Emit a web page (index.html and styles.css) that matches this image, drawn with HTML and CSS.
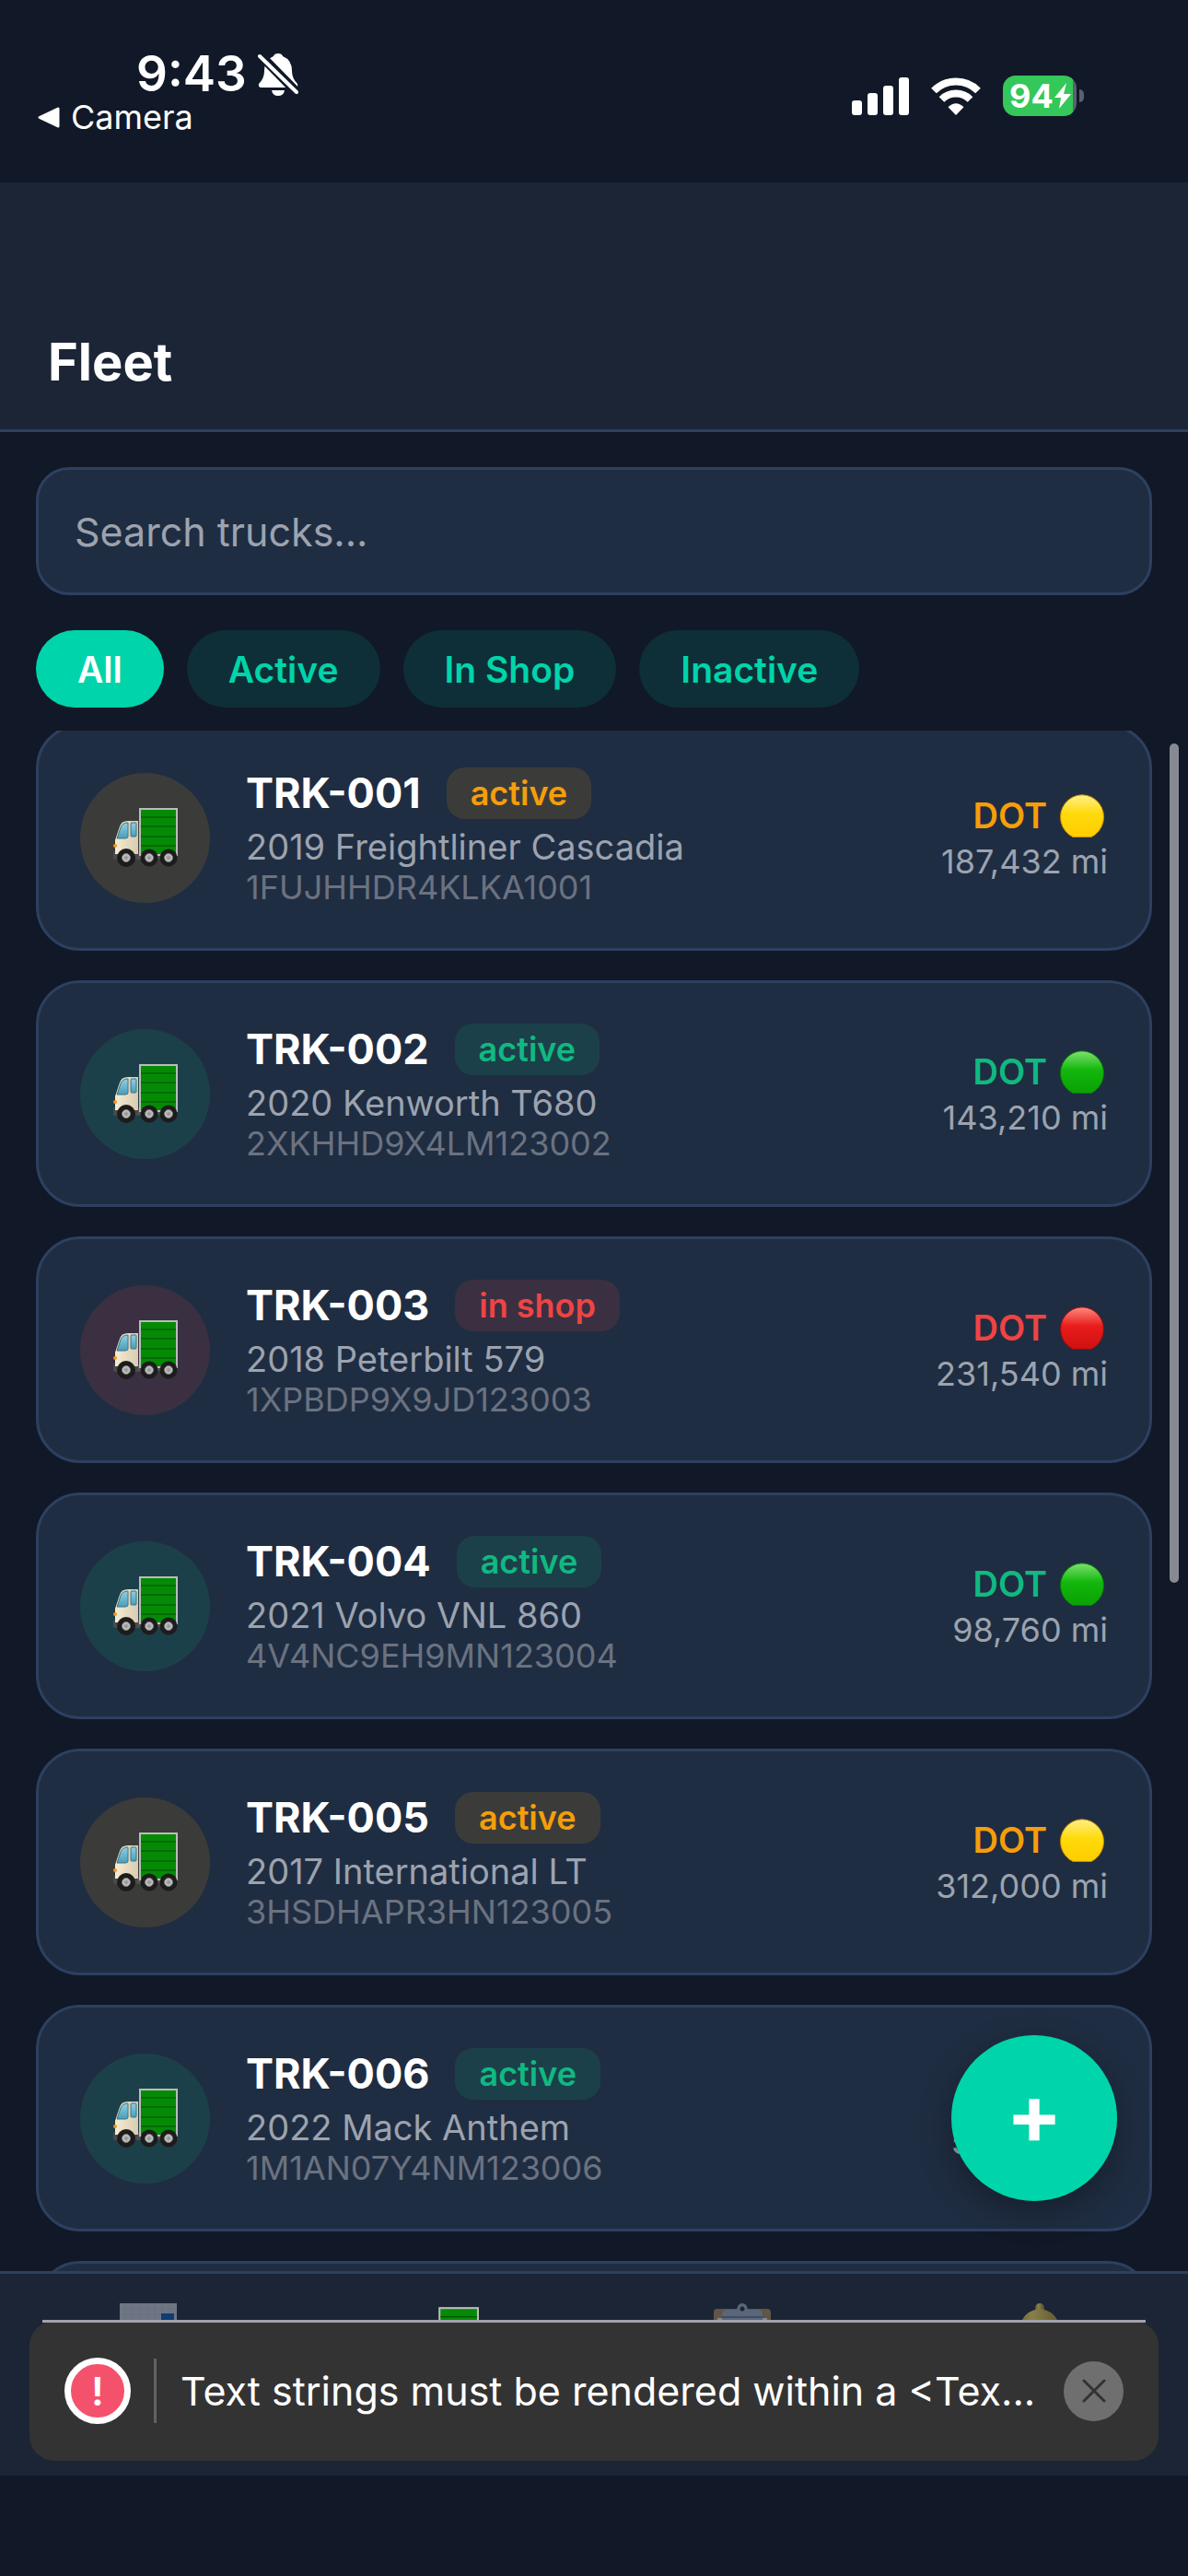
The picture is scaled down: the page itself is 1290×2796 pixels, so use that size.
FILE: index.html
```html
<!DOCTYPE html>
<html lang="en">
<head>
  <meta charset="UTF-8" />
  <meta name="viewport" content="width=device-width, initial-scale=1.0" />
  <title>Fleet</title>
  <link rel="stylesheet" href="styles.css">
</head>
<body>
  <!-- shared icons -->
  <svg class="defs" aria-hidden="true">
    <defs>
      <linearGradient id="glass" x1="0" y1="0" x2="0" y2="1">
        <stop offset="0" stop-color="#8fd0e2" /><stop offset="1" stop-color="#4a9dba" />
      </linearGradient>
      <linearGradient id="cab" x1="0" y1="0" x2="1" y2="0">
        <stop offset="0" stop-color="#f6ecd2" /><stop offset="1" stop-color="#d8ccb0" />
      </linearGradient>
      <radialGradient id="hub"><stop offset="0" stop-color="#888" /><stop offset="1" stop-color="#d5d5d5" /></radialGradient>
      <linearGradient id="yellow" x1="0" y1="0" x2="0" y2="1">
        <stop offset="0" stop-color="#fff08a" /><stop offset=".45" stop-color="#ffda0a" /><stop offset="1" stop-color="#ffcc00" />
      </linearGradient>
      <linearGradient id="green" x1="0" y1="0" x2="0" y2="1">
        <stop offset="0" stop-color="#7fe070" /><stop offset=".45" stop-color="#12b80c" /><stop offset="1" stop-color="#0aa005" />
      </linearGradient>
      <linearGradient id="red" x1="0" y1="0" x2="0" y2="1">
        <stop offset="0" stop-color="#ff8a80" /><stop offset=".45" stop-color="#e81c1c" /><stop offset="1" stop-color="#d01010" />
      </linearGradient>
      <linearGradient id="brass" x1="0" y1="0" x2="1" y2="0">
        <stop offset="0" stop-color="#b8862a" /><stop offset=".35" stop-color="#f0dc5a" /><stop offset="1" stop-color="#9a7420" />
      </linearGradient>
      <symbol id="truck" viewBox="0 0 70 64">
        <rect x="0" y="47" width="30" height="9" rx="2" fill="#4a4a4a" />
        <rect x="27" y="49" width="42" height="6" fill="#555" />
        <path d="M2 50V35L7 20Q9 14 16 14H27V50Z" fill="url(#cab)" />
        <path d="M4 33L8 21Q10 16 16 16V31Q16 33 13 33Z" fill="url(#glass)" stroke="#3d7286" />
        <rect x="19" y="16" width="6" height="15" rx="1" fill="url(#glass)" stroke="#3d7286" />
        <circle cx="2" cy="41" r="2" fill="#f5921e" />
        <rect x="29" y="1" width="40" height="50" fill="#058a05" stroke="#b9bdb9" stroke-width="2" />
        <path d="M30 10H68M30 20H68M30 31H68M30 41H68" stroke="#035003" stroke-width="1.2" />
        <g fill="#1c1c1c">
          <circle cx="14" cy="54" r="10" /><circle cx="39" cy="54" r="9.5" /><circle cx="60" cy="54" r="9.5" />
        </g>
        <g fill="url(#hub)" stroke="#777">
          <circle cx="14" cy="54" r="4.5" /><circle cx="39" cy="54" r="4.5" /><circle cx="60" cy="54" r="4.5" />
        </g>
      </symbol>
      <symbol id="dot-yellow" viewBox="0 0 48 47"><path d="M14 46.5A23.5 24 0 1 1 34 46.5Z" fill="url(#yellow)" stroke="#c98a00" /></symbol>
      <symbol id="dot-green" viewBox="0 0 48 47"><path d="M14 46.5A23.5 24 0 1 1 34 46.5Z" fill="url(#green)" stroke="#087a06" /></symbol>
      <symbol id="dot-red" viewBox="0 0 48 47"><path d="M14 46.5A23.5 24 0 1 1 34 46.5Z" fill="url(#red)" stroke="#8e0c0c" /></symbol>
    </defs>
  </svg>

  <div class="status-bar">
    <div class="status-left">
      <div class="clock">
        <span>9:43</span>
        <svg width="44" height="47" viewBox="0 0 44 47" aria-hidden="true">
          <path d="M22 1Q26 1 27 4Q37 8 37 20Q37 28 43 34Q44 38 41 38H4Q0 38 1 34Q7 28 7 20Q7 8 17 4Q18 1 22 1Z" fill="#fff" />
          <path d="M15 41H29Q28 47 22 47Q16 47 15 41Z" fill="#fff" />
          <path d="M0 0L43 44" stroke="#111827" stroke-width="10" />
          <path d="M2 4L42 43" stroke="#fff" stroke-width="4" stroke-linecap="round" />
        </svg>
      </div>
      <a class="back-link" href="#">
        <svg width="24" height="23" viewBox="0 0 24 23" aria-hidden="true"><path d="M22 2V21L2 11.500Z" fill="#fff" stroke="#fff" stroke-width="3" stroke-linejoin="round" /></svg>
        Camera
      </a>
    </div>
    <div class="status-right">
      <svg width="62" height="41" viewBox="0 0 62 41" fill="#fff" aria-hidden="true">
        <rect x="0" y="25" width="11" height="16" rx="3" /><rect x="17" y="17" width="11" height="24" rx="3" />
        <rect x="34" y="9" width="11" height="32" rx="3" /><rect x="51" y="0" width="11" height="41" rx="3" />
      </svg>
      <svg width="54" height="41" viewBox="1 0 54 41" fill="none" stroke="#fff" stroke-width="8" aria-hidden="true">
        <path d="M4 14.500A34 34 0 0 1 52 14.500" /><path d="M12.500 24A22 22 0 0 1 43.500 24" />
        <path d="M28 41L19.500 32.200Q28 24.500 36.500 32.200Z" fill="#fff" stroke="none" />
      </svg>
      <div class="battery">
        <span>94</span>
        <svg width="18" height="28" viewBox="0 0 18 28" aria-hidden="true"><path d="M13 0L0 16H7L5 28L18 12H10Z" fill="#fff" /></svg>
      </div>
    </div>
  </div>

  <header class="header">
    <h1>Fleet</h1>
  </header>

  <main class="content">
    <div class="filters">
      <input class="search" type="text" placeholder="Search trucks..." aria-label="Search trucks" />
      <div class="chips">
        <button class="chip selected">All</button>
        <button class="chip">Active</button>
        <button class="chip">In Shop</button>
        <button class="chip">Inactive</button>
      </div>
    </div>

    <div class="list-area">
      <ul class="truck-list">
        <li class="card warn">
          <div class="avatar"><svg width="70" height="64" aria-hidden="true"><use href="#truck" /></svg></div>
          <div class="info">
            <div class="title-row"><h2>TRK-001</h2><span class="badge">active</span></div>
            <p class="model">2019 Freightliner Cascadia</p>
            <p class="vin">1FUJHHDR4KLKA1001</p>
          </div>
          <div class="side">
            <div class="dot">DOT <svg width="48" height="47" aria-hidden="true"><use href="#dot-yellow" /></svg></div>
            <p class="miles">187,432 mi</p>
          </div>
        </li>
        <li class="card ok">
          <div class="avatar"><svg width="70" height="64" aria-hidden="true"><use href="#truck" /></svg></div>
          <div class="info">
            <div class="title-row"><h2>TRK-002</h2><span class="badge">active</span></div>
            <p class="model">2020 Kenworth T680</p>
            <p class="vin">2XKHHD9X4LM123002</p>
          </div>
          <div class="side">
            <div class="dot">DOT <svg width="48" height="47" aria-hidden="true"><use href="#dot-green" /></svg></div>
            <p class="miles">143,210 mi</p>
          </div>
        </li>
        <li class="card bad">
          <div class="avatar"><svg width="70" height="64" aria-hidden="true"><use href="#truck" /></svg></div>
          <div class="info">
            <div class="title-row"><h2>TRK-003</h2><span class="badge">in shop</span></div>
            <p class="model">2018 Peterbilt 579</p>
            <p class="vin">1XPBDP9X9JD123003</p>
          </div>
          <div class="side">
            <div class="dot">DOT <svg width="48" height="47" aria-hidden="true"><use href="#dot-red" /></svg></div>
            <p class="miles">231,540 mi</p>
          </div>
        </li>
        <li class="card ok">
          <div class="avatar"><svg width="70" height="64" aria-hidden="true"><use href="#truck" /></svg></div>
          <div class="info">
            <div class="title-row"><h2>TRK-004</h2><span class="badge">active</span></div>
            <p class="model">2021 Volvo VNL 860</p>
            <p class="vin">4V4NC9EH9MN123004</p>
          </div>
          <div class="side">
            <div class="dot">DOT <svg width="48" height="47" aria-hidden="true"><use href="#dot-green" /></svg></div>
            <p class="miles">98,760 mi</p>
          </div>
        </li>
        <li class="card warn">
          <div class="avatar"><svg width="70" height="64" aria-hidden="true"><use href="#truck" /></svg></div>
          <div class="info">
            <div class="title-row"><h2>TRK-005</h2><span class="badge">active</span></div>
            <p class="model">2017 International LT</p>
            <p class="vin">3HSDHAPR3HN123005</p>
          </div>
          <div class="side">
            <div class="dot">DOT <svg width="48" height="47" aria-hidden="true"><use href="#dot-yellow" /></svg></div>
            <p class="miles">312,000 mi</p>
          </div>
        </li>
        <li class="card ok">
          <div class="avatar"><svg width="70" height="64" aria-hidden="true"><use href="#truck" /></svg></div>
          <div class="info">
            <div class="title-row"><h2>TRK-006</h2><span class="badge">active</span></div>
            <p class="model">2022 Mack Anthem</p>
            <p class="vin">1M1AN07Y4NM123006</p>
          </div>
          <div class="side">
            <div class="dot"><svg width="48" height="47" aria-hidden="true"><use href="#dot-green" /></svg></div>
            <p class="miles">54,320 mi</p>
          </div>
        </li>
        <li class="card"></li>
      </ul>
      <div class="scrollbar"></div>
      <button class="fab" aria-label="Add truck">+</button>
    </div>
  </main>

  <div class="bottom">
    <nav class="tabs">
      <a class="tab" href="#" aria-label="Dashboard">
        <svg width="62" height="62" viewBox="0 0 62 62" aria-hidden="true">
          <rect width="62" height="62" fill="#c0c6d2" />
          <path d="M0 6H62M0 12H62M0 18H62M6 0V62M14 0V62M22 0V62M30 0V62M38 0V62M46 0V62M54 0V62" stroke="#b4bbc9" />
          <rect x="45" y="11" width="14" height="48" fill="#0555b5" />
          <rect x="24" y="30" width="14" height="29" fill="#d02828" />
          <rect x="4" y="22" width="14" height="37" fill="#169016" />
        </svg>
      </a>
      <a class="tab active" href="#" aria-label="Fleet">
        <svg width="73" height="67" aria-hidden="true"><use href="#truck" /></svg>
      </a>
      <a class="tab" href="#" aria-label="Inspections">
        <svg width="62" height="70" viewBox="0 0 62 70" aria-hidden="true">
          <rect y="6" width="62" height="64" rx="4" fill="#a98655" />
          <rect x="4" y="16" width="54" height="50" fill="#e8e8ee" />
          <path d="M9 18V11Q10 7 15 7H25Q26 0 31 0Q36 0 37 7H47Q52 7 53 11V18Z" fill="#9aa6be" />
          <path d="M8 15H54" stroke="#6a7690" stroke-width="2" />
          <circle cx="31" cy="6" r="2.500" fill="#1b2536" />
        </svg>
      </a>
      <a class="tab" href="#" aria-label="Alerts">
        <svg width="62" height="70" viewBox="0 0 62 70" aria-hidden="true">
          <circle cx="31" cy="5" r="5" fill="url(#brass)" />
          <path d="M31 6Q50 8 53 28L60 58H2L9 28Q12 8 31 6Z" fill="url(#brass)" />
          <circle cx="31" cy="62" r="7" fill="#9a7420" />
        </svg>
      </a>
    </nav>
    <div class="toast" role="alert">
      <span class="toast-icon">!</span>
      <p class="toast-text">Text strings must be rendered within a &lt;Tex...</p>
      <button class="toast-close" aria-label="Dismiss">
        <svg width="26" height="26" viewBox="0 0 26 26" aria-hidden="true"><path d="M2 2L24 24M24 2L2 24" stroke="#333" stroke-width="3" stroke-linecap="round" /></svg>
      </button>
    </div>
  </div>
</body>
</html>
```
FILE: styles.css
```css
:root {
  --bg: #111827;
  --bar: #1b2536;
  --card: #1f2d42;
  --line: #2d4060;
  --accent: #00d4aa;
  --muted: #9ca3af;
  --dim: #6b7280;
}
* {
  box-sizing: border-box;
}
body {
  margin: 0;
  height: 100vh;
  display: flex;
  flex-direction: column;
  overflow: hidden;
  background: var(--bg);
  color: #fff;
  font-family: Inter, "Liberation Sans", sans-serif;
}
h1, h2, p, ul {
  margin: 0;
  padding: 0;
}
button {
  border: none;
  padding: 0;
  font-family: inherit;
  cursor: pointer;
}
svg {
  display: block;
  flex-shrink: 0;
}
.defs {
  position: absolute;
  width: 0;
  height: 0;
}

/* status bar */
.status-bar {
  height: 198px;
  flex-shrink: 0;
  display: flex;
  justify-content: space-between;
  padding: 50px 113px 0 41px;
}
.clock {
  display: flex;
  align-items: center;
  gap: 12px;
  padding-left: 107px;
  font-size: 53px;
  font-weight: 600;
  line-height: 60px;
}
.back-link {
  display: flex;
  align-items: center;
  gap: 12px;
  color: #fff;
  text-decoration: none;
  font-size: 36px;
  line-height: 34px;
}
.status-right {
  display: flex;
  align-items: center;
  gap: 24px;
  height: 44px;
  margin-top: 32px;
}
.battery {
  position: relative;
  display: flex;
  align-items: center;
  gap: 1px;
  width: 80px;
  height: 44px;
  margin-right: 8px;
  padding-left: 7px;
  border-radius: 14px;
  background: linear-gradient(to right, #34c759 76px, #5a6070 76px);
  font-size: 36px;
  font-weight: 700;
}
.battery::after {
  content: "";
  position: absolute;
  right: -8px;
  top: 15px;
  width: 5px;
  height: 14px;
  border-radius: 0 5px 5px 0;
  background: #5a6070;
}

/* header */
.header {
  flex-shrink: 0;
  padding: 160px 52px 38px;
  background: var(--bar);
  border-bottom: 3px solid var(--line);
}
h1 {
  font-size: 56px;
  font-weight: 700;
  line-height: 70px;
}

/* search and filters */
.content {
  flex: 1;
  min-height: 0;
  display: flex;
  flex-direction: column;
}
.filters {
  padding: 38px 39px 25px;
}
.search {
  display: block;
  width: 100%;
  height: 139px;
  padding: 0 39px;
  border: 3px solid var(--line);
  border-radius: 36px;
  background: var(--card);
  color: #fff;
  font-family: inherit;
  font-size: 43px;
}
.search::placeholder {
  color: var(--muted);
  opacity: 1;
}
.chips {
  display: flex;
  gap: 25px;
  margin-top: 38px;
}
.chip {
  height: 84px;
  padding: 0 45px;
  border-radius: 42px;
  background: #00d4aa1f;
  color: var(--accent);
  font-size: 39px;
  font-weight: 600;
}
.chip.selected {
  background: var(--accent);
  color: #fff;
}

/* truck list */
.list-area {
  position: relative;
  flex: 1;
  min-height: 0;
  overflow: hidden;
}
.truck-list {
  display: flex;
  flex-direction: column;
  gap: 32px;
  margin-top: -7px;
  padding: 0 39px;
  list-style: none;
}
.card {
  display: flex;
  align-items: center;
  gap: 39px;
  min-height: 246px;
  padding: 0 45px;
  border: 3px solid var(--line);
  border-radius: 48px;
  background: var(--card);
}
.warn {
  --tone: #f59e0b;
  --tint: #f59e0b22;
}
.ok {
  --tone: #10b981;
  --tint: #10b98122;
}
.bad {
  --tone: #ef4444;
  --tint: #ef444422;
}
.avatar {
  display: flex;
  align-items: center;
  justify-content: center;
  width: 141px;
  height: 141px;
  border-radius: 50%;
  background: var(--tint);
}
.info {
  flex: 1;
  padding-bottom: 2px;
}
.title-row {
  display: flex;
  align-items: center;
  gap: 28px;
  height: 56px;
  margin-bottom: 8px;
}
h2 {
  font-size: 45px;
  font-weight: 700;
  line-height: 52px;
}
.badge {
  padding: 0 26px;
  border-radius: 20px;
  background: var(--tint);
  color: var(--tone);
  font-size: 36px;
  font-weight: 600;
  line-height: 56px;
}
.model {
  color: var(--muted);
  font-size: 38px;
  line-height: 45px;
}
.vin {
  color: var(--dim);
  font-size: 36px;
  line-height: 42px;
}
.side {
  text-align: right;
}
.dot {
  display: flex;
  align-items: center;
  justify-content: flex-end;
  gap: 14px;
  height: 48px;
  margin-bottom: 4px;
  padding-right: 4px;
  color: var(--tone);
  font-size: 38px;
  font-weight: 600;
}
.miles {
  color: var(--muted);
  font-size: 36px;
  line-height: 44px;
}
.scrollbar {
  position: absolute;
  top: 14px;
  right: 10px;
  width: 10px;
  height: 911px;
  border-radius: 5px;
  background: #888a93;
}
.fab {
  position: absolute;
  right: 77px;
  bottom: 76px;
  width: 180px;
  height: 180px;
  padding-bottom: 10px;
  border-radius: 50%;
  background: var(--accent);
  box-shadow: 0 12px 36px rgba(0,0,0,0.3);
  color: #fff;
  font-size: 90px;
  font-weight: 700;
}

/* bottom tabs */
.bottom {
  position: relative;
  flex-shrink: 0;
  margin-bottom: 109px;
  background: var(--bar);
  border-top: 3px solid var(--line);
}
.tabs {
  display: flex;
  height: 219px;
}
.tab {
  flex: 1;
  display: flex;
  justify-content: center;
  align-items: flex-start;
  padding-top: 32px;
  opacity: 0.5;
}
.tab.active {
  padding-top: 36px;
  opacity: 1;
}

/* error toast */
.toast {
  position: absolute;
  left: 32px;
  right: 32px;
  bottom: 16px;
  display: flex;
  align-items: center;
  height: 152px;
  padding: 0 38px;
  border-radius: 27px;
  background: #333;
}
.toast::before {
  content: "";
  position: absolute;
  top: -1px;
  left: 14px;
  right: 14px;
  height: 3px;
  background: #a0a3aa;
}
.toast-icon {
  flex-shrink: 0;
  width: 72px;
  height: 72px;
  border: 7px solid #fff;
  border-radius: 50%;
  background: #f4516c;
  font-size: 43px;
  font-weight: 600;
  line-height: 58px;
  text-align: center;
}
.toast-text {
  flex: 1;
  min-width: 0;
  margin: 0 20px 0 25px;
  padding-left: 26px;
  border-left: 3px solid #626262;
  overflow: hidden;
  text-overflow: ellipsis;
  white-space: nowrap;
  font-size: 43px;
  line-height: 70px;
}
.toast-close {
  flex-shrink: 0;
  display: flex;
  align-items: center;
  justify-content: center;
  width: 65px;
  height: 65px;
  border-radius: 50%;
  background: #6f6f6f;
}
```
